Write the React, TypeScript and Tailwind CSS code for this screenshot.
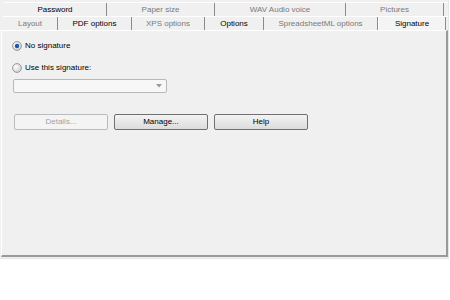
import React from "react";

interface Tab {
  label: string;
  width: string;
  strong?: boolean;
  active?: boolean;
}

const topTabs: Tab[] = [
  { label: "Password", width: "w-[103px]", strong: true },
  { label: "Paper size", width: "w-[108px]" },
  { label: "WAV Audio voice", width: "w-[131px]" },
  { label: "Pictures", width: "w-[98px]" },
];

const bottomTabs: Tab[] = [
  { label: "Layout", width: "w-[55px]" },
  { label: "PDF options", width: "w-[74px]", strong: true },
  { label: "XPS options", width: "w-[73px]" },
  { label: "Options", width: "w-[59px]", strong: true },
  { label: "SpreadsheetML options", width: "w-[114px]" },
  { label: "Signature", width: "w-[68px]", strong: true, active: true },
];

function TabItem({ tab }: { tab: Tab }) {
  return (
    <div
      className={`${tab.width} h-full flex items-center justify-center border-r border-[#8c8c8c] ${
        tab.active ? "bg-[#f4f4f4] border-l border-l-white" : ""
      } ${tab.strong ? "text-black" : "text-[#7a7a7a]"}`}
    >
      {tab.label}
    </div>
  );
}

function Radio({ checked }: { checked?: boolean }) {
  const id = checked ? "rg1" : "rg0";
  return (
    <svg width="10" height="10" viewBox="0 0 10 10" className="shrink-0">
      <defs>
        <radialGradient id={id} cx="35%" cy="35%" r="70%">
          <stop offset="0%" stopColor="#ffffff" />
          <stop offset="100%" stopColor="#cfcfcf" />
        </radialGradient>
      </defs>
      <circle cx="5" cy="5" r="4.4" fill={`url(#${id})`} stroke="#8e8f8f" strokeWidth="0.9" />
      {checked && <circle cx="5" cy="5" r="2.2" fill="#1d5aab" />}
    </svg>
  );
}

function Button({ label, disabled }: { label: string; disabled?: boolean }) {
  return (
    <div
      className={`w-[94px] h-[16px] rounded-[2px] border flex items-center justify-center ${
        disabled
          ? "border-[#b9bcbf] bg-[#f4f4f4] text-[#a3a3a3]"
          : "border-[#707070] bg-gradient-to-b from-[#f3f3f3] to-[#dcdcdc] text-black"
      }`}
    >
      {label}
    </div>
  );
}

export default function App() {
  return (
    <div className="w-[450px] h-[300px] bg-white font-['Liberation_Sans',Arial,sans-serif] text-[8px] leading-none">
      <div className="w-[449px] h-[259px] bg-[#f0f0f0] pt-[2px] border-r border-b border-[#e6e6e6]">
        <div className="flex ml-[4px] h-[14px] border-t border-white">
          {topTabs.map((t) => (
            <TabItem key={t.label} tab={t} />
          ))}
        </div>
        <div className="flex ml-[3px] h-[14px] border-t border-white">
          {bottomTabs.map((t) => (
            <TabItem key={t.label} tab={t} />
          ))}
        </div>
        <div className="ml-[1px] w-[447px] h-[227px] border-l border-t border-white border-r-2 border-r-[#9a9a9a] border-b-2 border-b-[#9a9a9a] pl-[10px] pt-[10px] flex flex-col">
          <div className="flex items-center gap-[3px] h-[10px] text-black">
            <Radio checked />
            <span>No signature</span>
          </div>
          <div className="flex items-center gap-[3px] h-[10px] mt-[12px] text-black">
            <Radio />
            <span>Use this signature:</span>
          </div>
          <div className="mt-[6px] ml-[1px] w-[154px] h-[14px] rounded-[2px] border border-[#b8b8b8] bg-[#f7f7f7] flex items-center justify-end pr-[4px]">
            <svg width="6" height="4" viewBox="0 0 6 4">
              <path d="M0 0 L6 0 L3 3.5 Z" fill="#9a9a9a" />
            </svg>
          </div>
          <div className="flex gap-[6px] mt-[21px] ml-[2px]">
            <Button label="Details..." disabled />
            <Button label="Manage..." />
            <Button label="Help" />
          </div>
        </div>
      </div>
    </div>
  );
}
